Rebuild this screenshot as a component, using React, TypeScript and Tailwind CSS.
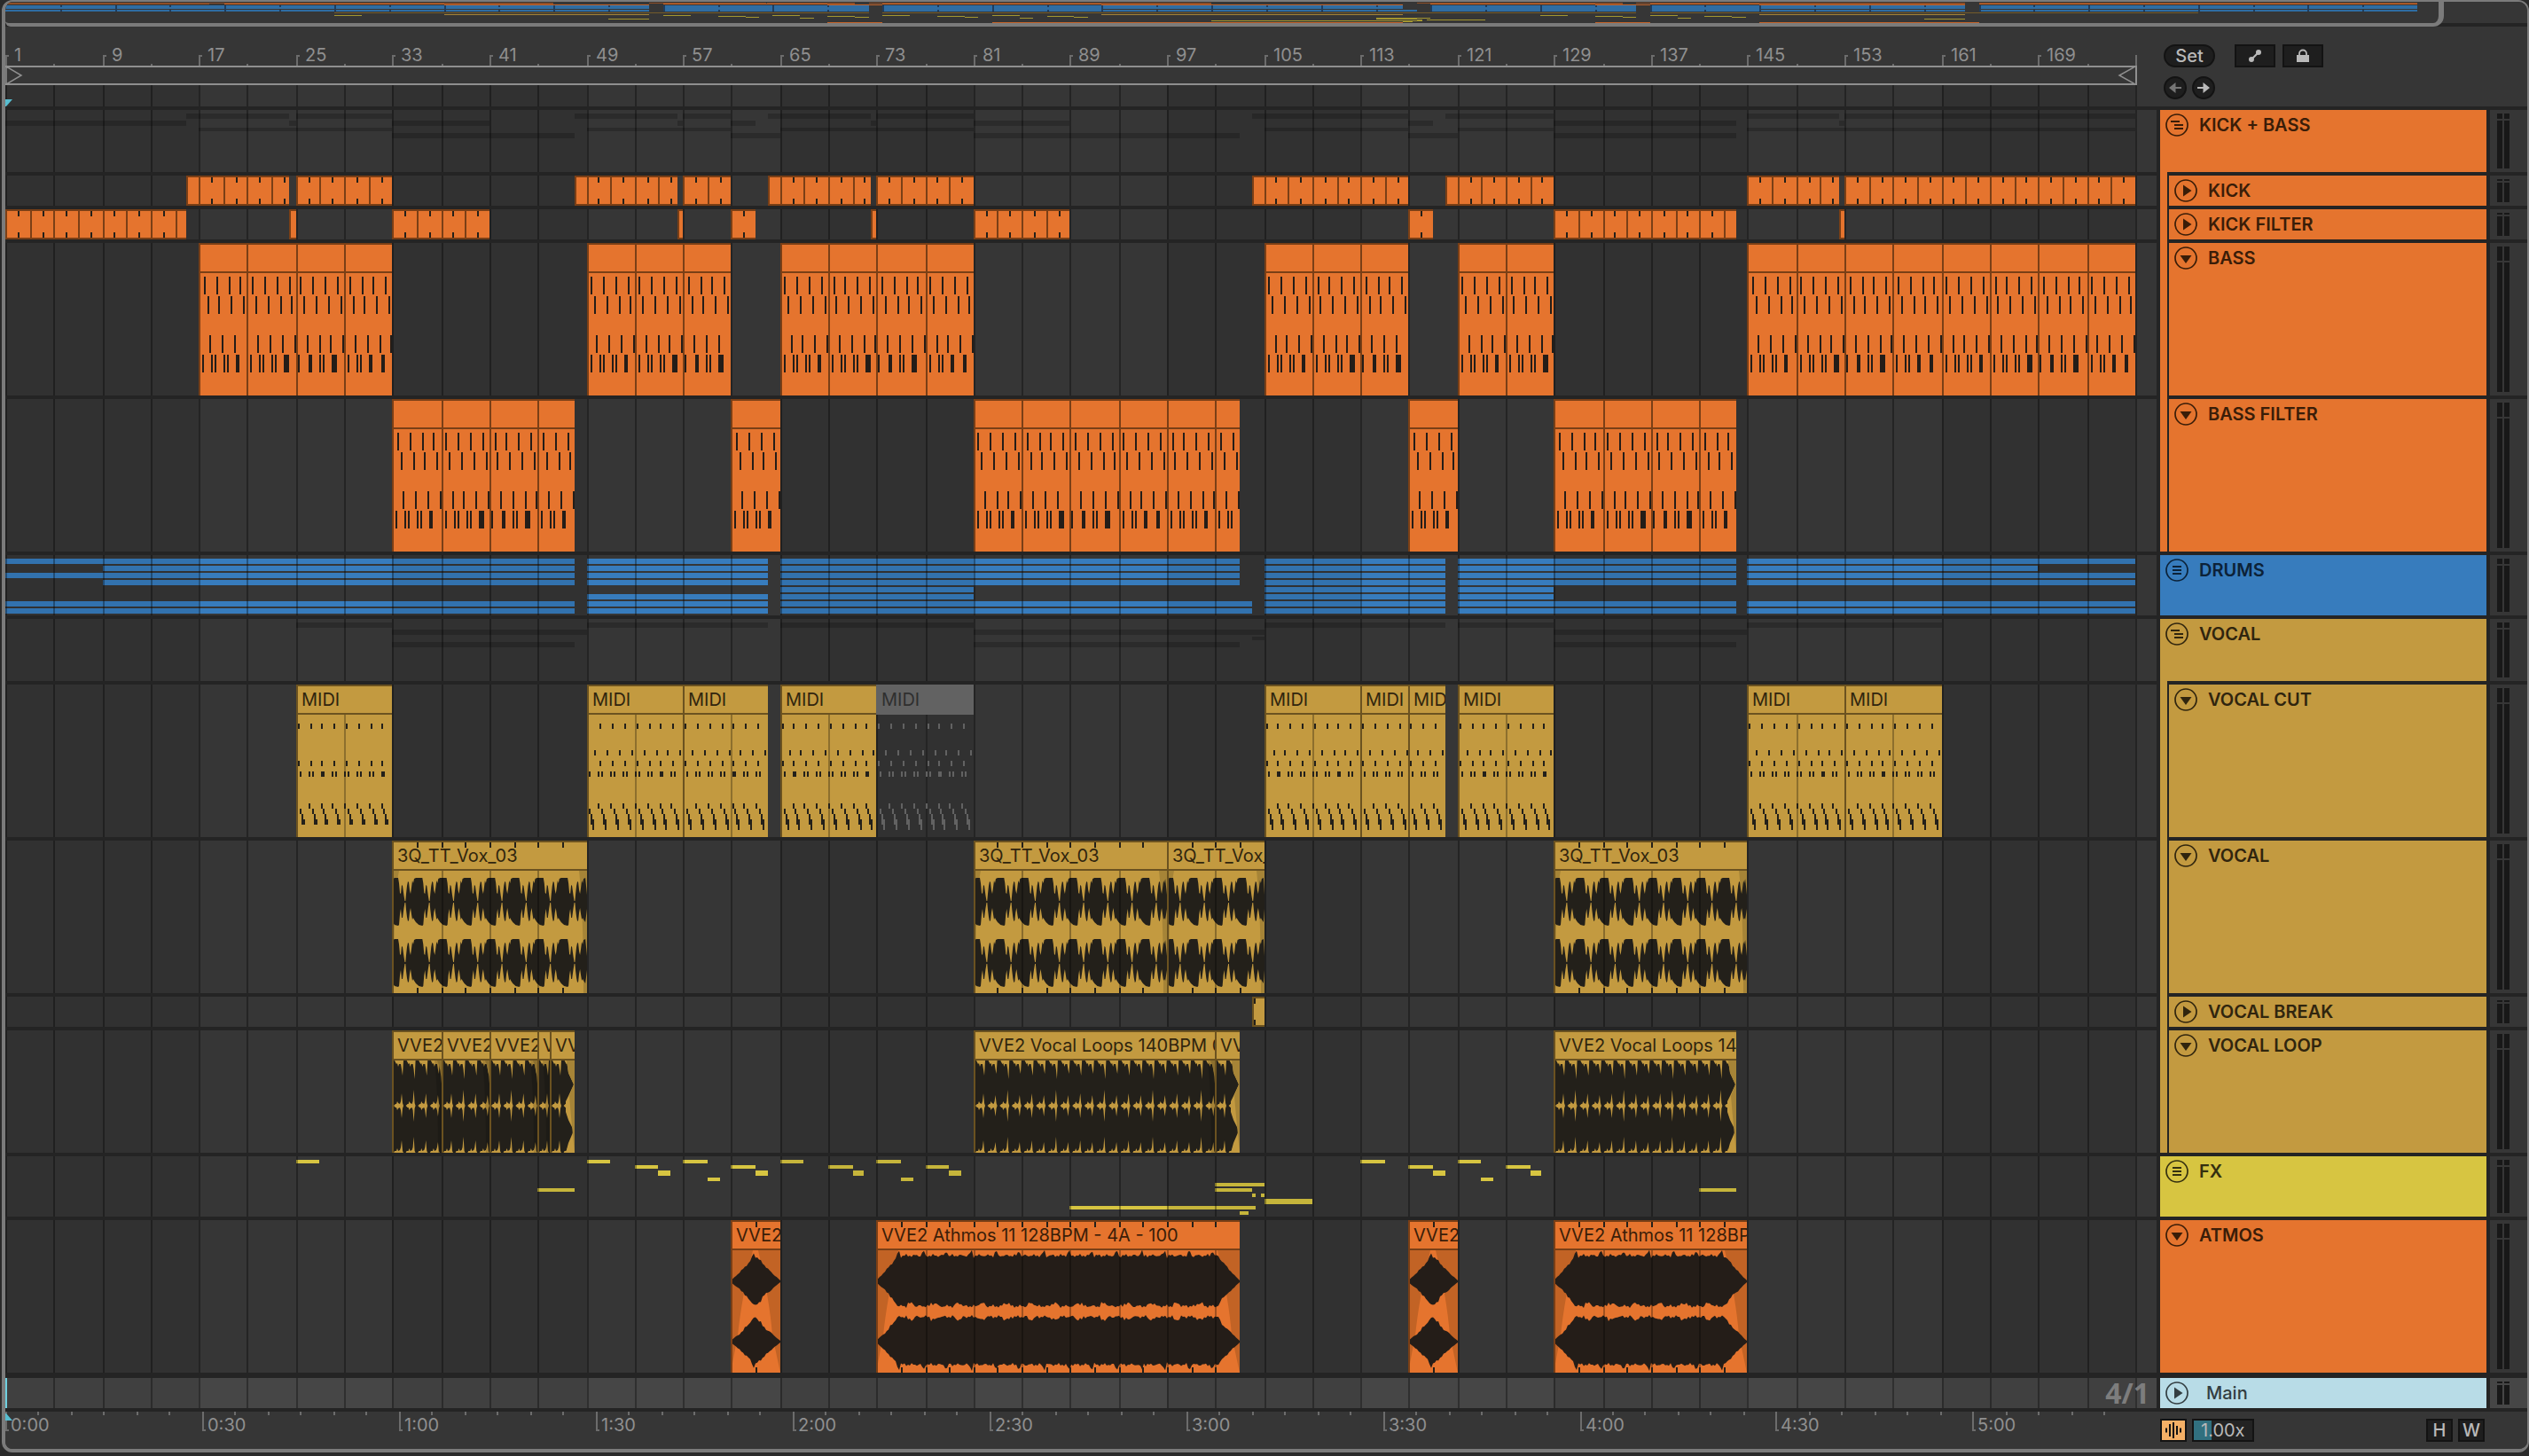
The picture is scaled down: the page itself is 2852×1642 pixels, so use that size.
import React from "react";

const LANE_W = 2426
const BAR = 13.645
const END = 177

interface IClip {
    from: number;
    to: number;
    name?: string;
    muted?: boolean;
}
interface ITheme {
    fill: string;
    edge: string;
    grid: string;
    ink: string;
    wave: string;
    shade: string;
}
interface ITrack {
    name: string;
    kind: "group" | "block" | "bass" | "cut" | "vox" | "loop" | "atmos" | "drums" | "fx";
    icon: "stack" | "lines" | "right" | "down";
    height: string;
    px: number;
    color: string;
    text: string;
    strip?: string;
    meter: string;
    theme?: ITheme;
    clips?: IClip[];
    rows?: number[][];
}

// x of a bar on the lane, kept on even pixels
const snap = (bar: number) => 2 * Math.round(((bar - 1) * BAR + 0.08) / 2)
const pct = (x: number) => `${(x / LANE_W) * 100}%`
const clip = (from: number, to: number, name?: string, muted?: boolean): IClip => ({ from, to, name, muted })

const ORANGE: ITheme = { fill: "#e5742e", edge: "#7a3f16", grid: "#7a3f16", ink: "#3a1d08", wave: "#241d18", shade: "#c26325" }
const GOLD: ITheme = { fill: "#c39a40", edge: "#6b5220", grid: "#8d6f2d", ink: "#30250e", wave: "#23201a", shade: "#a68437" }

const VVE = "VVE2 Vocal Loops 140BPM 01"
const ATM = "VVE2 Athmos 11 128BPM - 4A - 100"
const VOX = "3Q_TT_Vox_03"

const KICK = [clip(15.9, 24.4), clip(25, 33), clip(48, 56.5), clip(57, 61), clip(64, 72.5), clip(73, 81), clip(104, 117), clip(120, 129), clip(145, 152.6), clip(153, 177)]
const KICK_FILTER = [clip(1, 15.9), clip(24.4, 25), clip(33, 41), clip(56.6, 57), clip(61, 63), clip(72.5, 73), clip(81, 89), clip(117, 119), clip(129, 144), clip(152.6, 153)]
const BASS = [clip(17, 33), clip(49, 61), clip(65, 81), clip(105, 117), clip(121, 129), clip(145, 177)]
const BASS_FILTER = [clip(33, 48), clip(61, 65), clip(81, 103), clip(117, 121), clip(129, 144)]
const CUT = [
    clip(25, 33, "MIDI"), clip(49, 57, "MIDI"), clip(57, 64, "MIDI"), clip(65, 73, "MIDI"), clip(73, 81, "MIDI", true),
    clip(105, 113, "MIDI"), clip(113, 117, "MIDI"), clip(117, 120, "MIDI"), clip(121, 129, "MIDI"), clip(145, 153, "MIDI"), clip(153, 161, "MIDI"),
]
const VOCAL = [clip(33, 49, VOX), clip(81, 97, VOX), clip(97, 105, VOX), clip(129, 145, VOX)]
const BREAK = [clip(104, 105)]
const LOOP = [clip(33, 37, VVE), clip(37, 41, VVE), clip(41, 45, VVE), clip(45, 46, VVE), clip(46, 48, VVE), clip(81, 101, VVE), clip(101, 103, VVE), clip(129, 144, VVE)]
const ATMOS = [clip(61, 65, ATM), clip(73, 103, ATM), clip(117, 121, ATM), clip(129, 145, ATM)]

// summary rows are [from, to, y, height]
const ghost = (clips: IClip[], y: number, h: number) => clips.map(c => [c.from, c.to, y, h])
const KICK_ROWS = [...ghost(KICK, 4, 6), ...ghost(KICK_FILTER, 12, 6), ...ghost(BASS, 20, 4), ...ghost(BASS_FILTER, 26, 6)]
const VOCAL_ROWS = [...ghost(CUT, 4, 6), ...ghost(VOCAL, 12, 6), ...ghost(BREAK, 20, 4), ...ghost(LOOP, 26, 6)]

const DRUM_SEGMENTS = [
    [[1, 48], [49, 64], [65, 103], [105, 120], [121, 144], [145, 177]],
    [[9, 48], [49, 64], [65, 103], [105, 120], [121, 144], [145, 169]],
    [[1, 48], [49, 64], [65, 103], [105, 120], [121, 144], [145, 177]],
    [[9, 48], [49, 64], [65, 103], [105, 120], [121, 144], [145, 177]],
    [[65, 81], [105, 120], [121, 129]],
    [[49, 64], [65, 81], [105, 120], [121, 129]],
    [[1, 48], [49, 64], [65, 104], [105, 120], [121, 144], [145, 177]],
    [[1, 48], [49, 64], [65, 104], [105, 120], [121, 144], [145, 177]],
]
const DRUM_ROWS = DRUM_SEGMENTS.flatMap((segs, i) => segs.map(s => [s[0], s[1], 4 + i * 8, 6]))

const FX_ROWS = [
    [25, 27, 4, 4], [45, 48, 36, 4], [49, 51, 4, 4], [53, 55, 10, 4], [55, 56, 16, 6], [57, 59, 4, 4], [59, 60, 24, 4],
    [61, 63, 10, 4], [63, 64, 16, 6], [65, 67, 4, 4], [69, 71, 10, 4], [71, 72, 16, 6], [73, 75, 4, 4], [75, 76, 24, 4],
    [77, 79, 10, 4], [79, 80, 16, 6], [89, 104.4, 56, 4], [101, 105, 30, 4], [101, 104, 36, 4], [104, 104.4, 42, 4],
    [104.7, 105, 42, 4], [103, 103.7, 62, 4], [105, 109, 48, 6], [113, 115, 4, 4], [117, 119, 10, 4], [119, 120, 16, 6],
    [121, 123, 4, 4], [123, 124, 24, 4], [125, 127, 10, 4], [127, 128, 16, 6], [141, 144, 36, 4],
]

const O = { color: "bg-[#e5742e]", text: "text-[#3a1d08]", theme: ORANGE }
const G = { color: "bg-[#c39a40]", text: "text-[#30250e]", theme: GOLD }

const TRACKS: ITrack[] = [
    { ...O, name: "KICK + BASS", kind: "group", icon: "stack", height: "h-[70px]", px: 70, meter: "h-1.5", rows: KICK_ROWS },
    { ...O, name: "KICK", kind: "block", icon: "right", height: "h-[34px]", px: 34, strip: "bg-[#e5742e]", meter: "h-0.5", clips: KICK },
    { ...O, name: "KICK FILTER", kind: "block", icon: "right", height: "h-[34px]", px: 34, strip: "bg-[#e5742e]", meter: "h-0.5", clips: KICK_FILTER },
    { ...O, name: "BASS", kind: "bass", icon: "down", height: "h-[172px]", px: 172, strip: "bg-[#e5742e]", meter: "h-4", clips: BASS },
    { ...O, name: "BASS FILTER", kind: "bass", icon: "down", height: "h-[172px]", px: 172, strip: "bg-[#e5742e]", meter: "h-4", clips: BASS_FILTER },
    { name: "DRUMS", kind: "drums", icon: "lines", height: "h-[68px]", px: 68, color: "bg-[#377cbd]", text: "text-[#0c2238]", meter: "h-1.5", rows: DRUM_ROWS },
    { ...G, name: "VOCAL", kind: "group", icon: "stack", height: "h-[70px]", px: 70, meter: "h-1.5", rows: VOCAL_ROWS },
    { ...G, name: "VOCAL CUT", kind: "cut", icon: "down", height: "h-[172px]", px: 172, strip: "bg-[#c39a40]", meter: "h-4", clips: CUT },
    { ...G, name: "VOCAL", kind: "vox", icon: "down", height: "h-[172px]", px: 172, strip: "bg-[#c39a40]", meter: "h-4", clips: VOCAL },
    { ...G, name: "VOCAL BREAK", kind: "block", icon: "right", height: "h-[34px]", px: 34, strip: "bg-[#c39a40]", meter: "h-0.5", clips: BREAK },
    { ...G, name: "VOCAL LOOP", kind: "loop", icon: "down", height: "h-[138px]", px: 138, strip: "bg-[#c39a40]", meter: "h-4", clips: LOOP },
    { name: "FX", kind: "fx", icon: "lines", height: "h-[68px]", px: 68, color: "bg-[#d7c541]", text: "text-[#343010]", meter: "h-1.5", rows: FX_ROWS },
    { ...O, name: "ATMOS", kind: "atmos", icon: "down", height: "h-[172px]", px: 172, meter: "h-4", clips: ATMOS },
]

const range = (from: number, to: number, step: number) => {
    const out: number[] = []
    for (let n = from; n < to; n += step) out.push(n)
    return out
}

const Grid = () => (
    <svg className="absolute inset-0 h-full w-full" viewBox={`0 0 ${LANE_W} 10`} preserveAspectRatio="none" shapeRendering="crispEdges" aria-hidden="true">
        {range(1, END, 32).map(n => <rect key={n} x={snap(n)} y={0} width={snap(n + 16) - snap(n)} height={10} fill="#000" opacity={0.08} />)}
        {range(1, END + 1, 4).map(n => <rect key={n} x={snap(n)} y={0} width={2} height={10} fill="#000" opacity={0.33} />)}
    </svg>
)

const BASS_STEPS = [
    [[4, 2], [14, 2], [18, 2], [28, 2], [32, 2], [42, 4]],
    [[4, 2], [14, 2], [18, 2], [28, 2], [32, 2], [42, 6]],
    [[2, 2], [14, 4], [26, 2], [30, 2], [40, 6]],
    [[4, 2], [14, 2], [18, 2], [28, 4], [42, 4]],
]

const BassNotes = ({ c, w }: { c: IClip; w: number }) => {
    const x0 = snap(c.from)
    const even = (v: number) => 2 * Math.round(v / 2)
    return (
        <g fill="#241d18">
            {range(c.from, c.to, 1).map(n => {
                const x = (n - 1) * BAR - x0
                return (
                    <g key={n}>
                        <rect x={even(x + 5.4)} y={38} width={2} height={20} />
                        <rect x={even(x + 9)} y={60} width={2} height={20} />
                        <rect x={even(x + 12)} y={104} width={2} height={20} />
                    </g>
                )
            })}
            {range(c.from, c.to, 4).map((n, i) => BASS_STEPS[i % 4].map(([dx, sw]) => {
                const x = snap(n) - x0 + dx
                return x < w ? <rect key={`${n}-${dx}`} x={x} y={126} width={sw} height={20} /> : null
            }))}
            {range(c.from + 4, c.to, 4).map(n => <rect key={n} x={snap(n) - x0} y={0} width={2} height={172} fill="#7a3f16" />)}
        </g>
    )
}

const CutNotes = ({ c, color, full }: { c: IClip; color: string; full: boolean }) => {
    const x0 = snap(c.from)
    return (
        <g fill={color}>
            {range(c.from, c.to, 1).map(n => {
                const x = 2 * Math.round(((n - 1) * BAR - x0) / 2)
                return (
                    <g key={n}>
                        <rect x={x + 2} y={44} width={2} height={6} />
                        {full && <rect x={x + 10} y={74} width={2} height={6} />}
                        <rect x={x + 2} y={86} width={2} height={6} />
                        <rect x={x + 4} y={98} width={2} height={6} />
                        <rect x={x + 14} y={98} width={2} height={6} />
                        <rect x={x + 14} y={134} width={2} height={6} />
                        <rect x={x + 4} y={140} width={2} height={6} />
                        <rect x={x + 6} y={146} width={2} height={6} />
                        <rect x={x + 6} y={152} width={4} height={6} />
                        {full && <rect x={x + 8} y={158} width={2} height={6} />}
                    </g>
                )
            })}
        </g>
    )
}

// one two-bar phrase of the vocal: [offset, upper, lower]
const VOX_SHAPE = [
    [0, 27, 26], [4, 27, 27], [5, 21, 26], [6, 10, 14], [7, 9, 8], [8, 19, 18], [9, 18, 18], [10.5, 7, 7], [11.5, 1, 1], [12.3, 1, 1],
    [13, 9, 9], [14, 18, 17], [15, 23, 22], [16, 22, 21], [17, 13, 12], [18, 9, 7], [19, 16, 14], [20, 24, 20], [21, 21, 18], [22, 26, 20], [24, 27, 23],
]

const voxPath = (w: number, cy: number) => {
    const top: string[] = []
    const bottom: string[] = []
    for (let k = -1; k * 27.3 < w; k++) {
        VOX_SHAPE.forEach(([dx, up, down]) => {
            const x = k * 27.3 + 3 + dx
            if (x < 0 || x > w) return
            top.push(`${x.toFixed(1)} ${cy - up}`)
            bottom.unshift(`${x.toFixed(1)} ${cy + down}`)
        })
    }
    return `M0 ${cy - 25}L${top.join("L")}L${w} ${cy - 8}L${w} ${cy + 8}L${bottom.join("L")}L0 ${cy + 22}Z`
}

const VoxWave = ({ w }: { w: number }) => (
    <g fill={GOLD.wave}>
        <path fill={GOLD.shade} d={`M0 34H8Q2 60 2 172H0ZM${w} 34H${w - 9}Q${w - 4} 80 ${w - 4} 172H${w}Z`} />
        <path d={voxPath(w, 69)} />
        <path d={voxPath(w, 138)} />
    </g>
)

// gaps the loop leaves once a bar: centre, top edge, bottom edge
const GAP_MID = [[2, 0], [4, 2], [5, 2], [6, 5], [7, 3], [9, 2], [10, 5], [11, 14], [12, 3], [13, 0]]
const GAP_TOP = [[3, 0], [5, 4], [6, 3], [7, 7], [8, 4], [10, 4], [11, 10], [12, 17], [13, 0]]
const GAP_LOW = [[2, 0], [3, 2], [5, 2], [6, 5], [7, 2], [9, 3], [10, 6], [11, 14], [12, 2], [13, 0]]

const loopGap = (x: number, deep: number) => {
    const line = (pts: number[][], y: number, dir: number) => pts.map(([dx, dy]) => `${(x + dx).toFixed(1)} ${y + dir * (dy > 12 ? dy + deep : dy)}`)
    const up = line(GAP_MID, 85, -1)
    const down = line(GAP_MID, 85, 1).reverse()
    return `M${up.join("L")}L${down.join("L")}ZM${line(GAP_TOP, 34, 1).join("L")}ZM${line(GAP_LOW, 138, -1).join("L")}Z`
}

const LoopWave = ({ w, last, seed }: { w: number; last: boolean; seed: number }) => {
    const gaps = range(0, w - 4, BAR).map((x, i) => loopGap(x, (i + seed) % 4 === 2 ? 4 : -(i % 2) * 2)).join("")
    return (
        <g>
            <rect x={0} y={34} width={w} height={104} fill={GOLD.wave} />
            <path fill={GOLD.fill} d={gaps} />
            {!last && w > 20 && <path fill={GOLD.shade} d={`M${w} 34h-5q4 8 5 26z`} />}
            {!last && <path fill="#000" opacity={0.15} d={`M${w} 34H${w - 8}Q${w - 4} 70 ${w - 4} 138H${w}Z`} />}
            {last && (
                <g>
                    <path fill={GOLD.fill} d={`M${w - 9} 34L${w - 8} 41L${w - 7} 48L${w - 1} 61L${w - 7} 74L${w - 10} 80V92L${w - 7} 101L${w - 1} 113L${w - 7} 127L${w - 10} 138H${w}V34Z`} />
                    <path fill={GOLD.shade} d={`M${w - 10} 34h1L${w - 7} 48L${w - 1} 61L${w - 6} 74Q${w - 3} 110 ${w} 138V34Z`} />
                </g>
            )}
        </g>
    )
}

const atmosPath = (w: number, cy: number, flip: number) => {
    const up: string[] = []
    const low: string[] = []
    const ramp = w < 80 ? w / 2 : 25
    for (let x = 0; x <= w; x += 2) {
        const edge = Math.min(1, Math.min(x, w - x) / ramp)
        const gain = edge < 1 ? Math.pow(edge, 1.1) : 1
        const phase = (x - 25 + 273) % 27.3
        const peak = phase < 2 ? 5 : phase < 4 ? -1 : phase > 25.3 ? 3 : 0
        const noise = Math.sin(x * 1.7) + Math.sin(x * 0.61 + cy)
        const dip = phase > 9 && phase < 17 ? -3 : 0
        const a = 28 + peak + noise
        const b = 27 + dip + noise
        up.push(`${x} ${(cy - 1 - gain * (flip ? b : a)).toFixed(1)}`)
        low.unshift(`${x} ${(cy + 1 + gain * (flip ? a - 3 : b)).toFixed(1)}`)
    }
    return `M${up.join("L")}L${w} ${cy}L${low.join("L")}Z`
}

const AtmosWave = ({ w }: { w: number }) => (
    <g fill={ORANGE.wave}>
        <path fill={ORANGE.shade} d={`M0 34H25Q12 90 8 130L0 172ZM${w} 34H${w - 25}Q${w - 12} 90 ${w - 9} 130L${w} 172Z`} />
        <path d={atmosPath(w, 69, 0)} />
        <path d={atmosPath(w, 137, 1)} />
    </g>
)

const Clip = ({ c, track }: { c: IClip; track: ITrack }) => {
    const theme = track.theme as ITheme
    const x0 = snap(c.from)
    const w = snap(c.to) - x0
    const h = track.px
    const kind = track.kind
    const short = kind === "block"
    const first = c.from % 2 === 1 ? c.from + 1 : Math.ceil(c.from / 2) * 2
    const audio = kind === "vox" || kind === "atmos"
    return (
        <div className="absolute inset-y-0 overflow-hidden" style={{ left: pct(x0), width: pct(w) }}>
            <svg className="absolute inset-0 h-full w-full" viewBox={`0 0 ${w} ${h}`} preserveAspectRatio="none" aria-hidden="true">
                {!c.muted && <rect width={w} height={h} fill={theme.fill} />}
                {c.muted && <rect width={w} height={34} fill="#626262" />}
                {kind === "vox" && <VoxWave w={w} />}
                {kind === "loop" && <LoopWave w={w} seed={c.from === 81 ? 0 : 1} last={c.to === 48 || c.to === 103 || c.to === 144} />}
                {kind === "atmos" && <AtmosWave w={w} />}
                <g shapeRendering="crispEdges">
                    {kind === "bass" && <BassNotes c={c} w={w} />}
                    {kind === "cut" && range(c.from + 4, c.to, 4).map(n => <rect key={n} x={snap(n) - x0} y={34} width={2} height={h} fill={c.muted ? "#242424" : theme.grid} />)}
                    {kind === "cut" && <CutNotes c={c} full={c.from > 25} color={c.muted ? "#626262" : "#23201a"} />}
                    {audio && range(c.from + 4, c.to, 4).map(n => <rect key={n} x={snap(n) - x0} y={34} width={2} height={h} fill="#000" opacity={0.3} />)}
                    {audio && range(c.from + 2, c.to, 2).map(n => (
                        <g key={n} fill="#23201a">
                            <rect x={snap(n) - x0} y={2} width={2} height={6} />
                            <rect x={snap(n) - x0} y={h - 6} width={2} height={6} />
                        </g>
                    ))}
                    {short && range(Math.ceil((c.from + 0.3) / 2) * 2 + 1 - (c.from % 2 === 1 ? 0 : 2), c.to, 2).map(n => (
                        n > c.from ? <rect key={n} x={snap(n) - x0} y={0} width={2} height={h} fill={theme.edge} /> : null
                    ))}
                    {short && range(first, c.to, 2).map(n => {
                        if (n === 16) return null
                        const x = theme === GOLD ? 2 : snap(n) - x0
                        return (
                            <g key={n} fill="#23201a">
                                <rect x={x} y={2} width={2} height={6} />
                                <rect x={x} y={26} width={2} height={6} />
                            </g>
                        )
                    })}
                    {!c.muted && <rect width={w} height={2} fill={theme.edge} />}
                    {!c.muted && <rect width={2} height={h} fill={theme.edge} />}
                    {!c.muted && <rect y={32} width={w} height={2} fill={theme.edge} />}
                </g>
            </svg>
            {c.name && (
                <span className="relative block h-[34px] w-full overflow-hidden pl-1.5 text-[20px] leading-[34px] whitespace-nowrap" style={{ color: c.muted ? "#2f2f2f" : theme.ink }}>
                    {c.name}
                </span>
            )}
        </div>
    )
}

const ROW_FILL: Record<string, string> = { group: "#2b2b2b", drums: "#377cbd", fx: "#d7c541" }

const Lane = ({ track }: { track: ITrack }) => {
    const { rows, clips } = track
    return (
        <div className={`relative min-w-0 flex-1 overflow-hidden bg-[#363636] ${track.height}`}>
            {rows && (
                <svg className="absolute inset-0 h-full w-full" viewBox={`0 0 ${LANE_W} ${track.px}`} preserveAspectRatio="none" shapeRendering="crispEdges" aria-hidden="true">
                    {rows.map((r, i) => <rect key={i} x={snap(r[0])} y={r[2]} width={snap(r[1]) - snap(r[0])} height={r[3]} fill={ROW_FILL[track.kind]} />)}
                </svg>
            )}
            <Grid />
            {clips && clips.map(c => <Clip key={c.from} c={c} track={track} />)}
        </div>
    )
}

const TrackIcon = ({ icon }: { icon: ITrack["icon"] }) => (
    <svg className="h-[26px] w-[26px]" viewBox="0 0 26 26" fill="none" stroke="currentColor" strokeWidth="2" aria-hidden="true">
        <circle cx="13" cy="13" r="12" strokeWidth="1.7" />
        {icon === "stack" && <path d="M6 9h10M10 13h10M10 17h10" />}
        {icon === "lines" && <path d="M8 9h10M8 13h10M8 17h10" />}
        {icon === "right" && <path d="M10 6.500v13l9.500-6.500z" fill="currentColor" stroke="none" />}
        {icon === "down" && <path d="M6.500 10h13l-6.500 9z" fill="currentColor" stroke="none" />}
    </svg>
)

const Meter = ({ top, bg }: { top: string; bg: string }) => (
    <div className={`flex w-[42px] gap-0.5 py-1 pl-2 ${bg}`}>
        {[0, 1].map(i => (
            <div key={i} className="flex w-1.5 flex-col gap-0.5">
                <div className={`bg-[#181818] ${top}`}></div>
                <div className="flex-1 bg-[#181818]"></div>
            </div>
        ))}
    </div>
)

const TrackRow = ({ track }: { track: ITrack }) => (
    <div className="flex gap-1">
        <Lane track={track} />
        <div className="flex w-[368px]">
            {track.strip && <div className={`-mt-1 mr-0.5 w-2 ${track.strip}`}></div>}
            <div className={`flex flex-1 items-start gap-3 pt-1 pl-1.5 ${track.color} ${track.text}`}>
                <button aria-label={`Unfold ${track.name}`}><TrackIcon icon={track.icon} /></button>
                <span className="text-[20px] leading-[26px] font-semibold">{track.name}</span>
            </div>
        </div>
        <Meter top={track.meter} bg="bg-[#363636]" />
    </div>
)

const MINI = 15.455
const MINI_W = 2844
const mini = (clips: IClip[], y: number, h: number, fill: string) => clips.map(c => ({ from: c.from, to: c.to, y, h, fill }))
const MINI_ROWS = [
    ...mini(KICK, 3, 1, "#8f4e26"),
    ...mini(KICK_FILTER, 3, 2, "#8f4e26"),
    ...mini(BASS, 4, 1, "#c5642a"),
    ...mini(BASS_FILTER, 5, 1, "#c5642a"),
    ...DRUM_SEGMENTS[0].map(s => ({ from: s[0], to: s[1], y: 6, h: 4, fill: "#2f6da3" })),
    ...DRUM_SEGMENTS[5].map(s => ({ from: s[0], to: s[1], y: 10, h: 1, fill: "#2f6da3" })),
    ...DRUM_SEGMENTS[6].map(s => ({ from: s[0], to: s[1], y: 11, h: 2, fill: "#2f6da3" })),
    ...mini(CUT, 14, 1, "#745c2b"),
    ...mini(VOCAL, 14, 1, "#745c2b"),
    ...mini(LOOP, 16, 1, "#a68437"),
    ...FX_ROWS.map(r => ({ from: r[0], to: r[1], y: 17 + Math.round(r[2] / 9), h: 1, fill: "#a3962f" })),
    ...mini(ATMOS, 25, 1, "#c5642a"),
]

const Overview = () => (
    <div className="relative h-7 border-b-4 border-[#242424] bg-[#363636]">
        <svg className="absolute inset-x-0 -top-0.5 h-[26px] w-full" viewBox={`0 0 ${MINI_W} 26`} preserveAspectRatio="none" shapeRendering="crispEdges" aria-hidden="true">
            {MINI_ROWS.map((r, i) => <rect key={i} x={(r.from - 1) * MINI} y={r.y} width={(r.to - r.from) * MINI} height={r.h} fill={r.fill} />)}
            {range(5, END, 4).map(n => <rect key={n} x={(n - 1) * MINI} y={6} width={2} height={n % 8 === 1 ? 7 : 2} fill="#1f3d5e" />)}
            {range(5, END, 4).map(n => <rect key={n} x={(n - 1) * MINI} y={11} width={2} height={2} fill="#1f3d5e" />)}
        </svg>
        <div className="absolute top-0 left-0 h-7 w-[96.7%] rounded-br-xl rounded-bl-md border-r-[6px] border-b-4 border-[#7b7b7b]"></div>
    </div>
)

const Ruler = () => (
    <div className="relative h-[90px] min-w-0 flex-1">
        <div className="relative h-11 overflow-hidden">
            {range(1, END, 8).map(n => (
                <div key={n} className="absolute bottom-0 h-3 border-l-2 border-[#6c6c6c]" style={{ left: pct(snap(n)) }}>
                    <span className="absolute top-0 left-0 h-0.5 w-0.5 bg-[#6c6c6c]"></span>
                    <span className="absolute bottom-0 left-2 text-[20px] leading-6 text-[#8f8f8f]">{n}</span>
                </div>
            ))}
            {range(5, END, 8).map(n => <div key={n} className="absolute bottom-0 h-0.5 w-0.5 bg-[#6c6c6c]" style={{ left: pct(snap(n)) }}></div>)}
            <div className="absolute bottom-0 h-3 w-0.5 bg-[#6c6c6c]" style={{ left: pct(snap(END)) }}></div>
        </div>
        <div className="relative h-[46px]">
            <Grid />
            <div className="relative flex h-[22px] justify-between border-y-2 border-r-2 border-[#8f8f8f] bg-[#363636]" style={{ width: pct(snap(END) + 2) }}>
                <svg className="h-[18px] w-5" viewBox="0 0 20 18" fill="none" stroke="#8f8f8f" strokeWidth="1.500" aria-hidden="true"><path d="M1 -1V19L18 9L1 -1" /></svg>
                <svg className="h-[18px] w-5" viewBox="0 0 20 18" fill="none" stroke="#8f8f8f" strokeWidth="1.500" aria-hidden="true"><path d="M20 -1L2 9L20 19" /></svg>
            </div>
            <svg className="absolute bottom-0 left-0 h-2 w-2" viewBox="0 0 8 8" aria-hidden="true"><path d="M0 0h8L1 8H0z" fill="#57bdd0" /></svg>
        </div>
    </div>
)

const Toolbar = () => (
    <div className="w-[414px] pt-5 pl-1 text-[#b9b9b9]">
        <div className="flex items-center">
            <button className="h-[26px] w-[58px] rounded-full border-2 border-[#131313] bg-[#1e1e1e] text-[20px] leading-[22px] font-medium">Set</button>
            <button aria-label="Automation mode" className="ml-[22px] flex h-[26px] w-[46px] items-center justify-center border-2 border-[#131313] bg-[#1e1e1e]">
                <svg className="h-4 w-4" viewBox="0 0 16 16" fill="currentColor" aria-hidden="true">
                    <circle cx="4" cy="12" r="3" /><circle cx="12" cy="4" r="3" /><path d="M4 12L12 4" stroke="currentColor" strokeWidth="2" />
                </svg>
            </button>
            <button aria-label="Lock envelopes" className="ml-2 flex h-[26px] w-[46px] items-center justify-center border-2 border-[#131313] bg-[#1e1e1e]">
                <svg className="h-4 w-4" viewBox="0 0 16 16" aria-hidden="true">
                    <rect x="1" y="7" width="14" height="8" fill="currentColor" /><path d="M4 8V5.500a4 4 0 0 1 8 0V8" fill="none" stroke="currentColor" strokeWidth="1.800" />
                </svg>
            </button>
        </div>
        <div className="mt-2.5 flex gap-1.5">
            <button aria-label="Previous locator" className="flex h-[26px] w-[26px] items-center justify-center rounded-full border-2 border-[#131313] bg-[#1e1e1e] text-[#757575]">
                <svg className="h-[14px] w-[14px]" viewBox="0 0 14 14" fill="currentColor" aria-hidden="true"><path d="M0 7L7.500 1V6H14V8H7.500V13Z" /></svg>
            </button>
            <button aria-label="Next locator" className="flex h-[26px] w-[26px] items-center justify-center rounded-full border-2 border-[#131313] bg-[#1e1e1e]">
                <svg className="h-[14px] w-[14px]" viewBox="0 0 14 14" fill="currentColor" aria-hidden="true"><path d="M14 7L6.500 1V6H0V8H6.500V13Z" /></svg>
            </button>
        </div>
    </div>
)

const MainRow = () => (
    <div className="mt-0.5 flex gap-1">
        <div className="relative flex h-[34px] min-w-0 flex-1 items-center justify-end overflow-hidden bg-[#464646] pr-2">
            <Grid />
            <div className="absolute inset-y-0 left-0 w-0.5 bg-[#6fd0e0]"></div>
            <span className="relative font-['Open_Sans',sans-serif] text-[32px] leading-8 font-bold text-[#7d7d7d]">4/1</span>
        </div>
        <div className="flex w-[368px] items-start gap-5 bg-[#b8dce7] pt-1 pl-1.5 text-[#333e42]">
            <button aria-label="Unfold Main"><TrackIcon icon="right" /></button>
            <span className="text-[20px] leading-[26px] font-medium">Main</span>
        </div>
        <Meter top="h-0.5" bg="bg-[#464646]" />
    </div>
)

const Footer = () => (
    <div className="flex h-[42px] gap-1 bg-[#363636]">
        <div className="relative min-w-0 flex-1 overflow-hidden">
            {range(0, 65, 1).map(i => {
                const secs = i * 5
                const major = secs % 30 === 0
                return (
                    <div key={i} className={`absolute top-0 border-l-2 border-[#6c6c6c] ${major ? "h-[22px]" : "h-1"}`} style={{ left: pct(2 * Math.round(i * 18.49)) }}>
                        {major && <span className="absolute bottom-0 left-0 h-0.5 w-0.5 bg-[#6c6c6c]"></span>}
                        {major && <span className="absolute top-[3px] left-1 text-[20px] leading-6 text-[#8f8f8f]">{`${Math.floor(secs / 60)}:${secs % 60 === 0 ? "00" : "30"}`}</span>}
                    </div>
                )
            })}
            <svg className="absolute top-0.5 left-0 h-2 w-2" viewBox="0 0 8 8" aria-hidden="true"><path d="M0 0h1L8 8H0z" fill="#57bdd0" /></svg>
        </div>
        <div className="flex w-[368px] items-start pt-2 text-[#b9b9b9]">
            <button aria-label="Follow waveform" className="flex h-[26px] w-[30px] items-center justify-center border-2 border-[#131313] bg-[#f5b066]">
                <svg className="h-5 w-5" viewBox="0 0 20 20" stroke="#131313" strokeWidth="2" aria-hidden="true"><path d="M2 7.500v5M6 3v14M10 1v18M14 5v10M18 7.500v5" /></svg>
            </button>
            <input aria-label="Waveform zoom" defaultValue="1.00x" className="ml-1.5 h-[26px] w-[70px] border-2 border-[#131313] bg-[linear-gradient(to_right,#31707f_20px,#232323_20px)] pl-2 text-[20px] leading-[22px]" />
            <button className="ml-auto h-[26px] w-[30px] border-2 border-[#131313] bg-[#1e1e1e] text-[20px] leading-[22px] font-medium">H</button>
            <button className="mr-0.5 ml-1.5 h-[26px] w-[30px] border-2 border-[#131313] bg-[#1e1e1e] text-[20px] leading-[22px] font-medium">W</button>
        </div>
        <div className="w-[42px]"></div>
    </div>
)

const App = () => {
    return (
        <div className="min-h-screen bg-[#2a2a2a] pb-1 pl-0.5 font-['Inter',sans-serif]">
            <div className="overflow-hidden rounded-xl border-4 border-t-2 border-r-2 border-[#7b7b7b] bg-[#363636]">
                <Overview />
                <div className="flex gap-1">
                    <Ruler />
                    <Toolbar />
                </div>
                <div className="flex flex-col gap-1 bg-[#242424] py-1">
                    {TRACKS.map((t, i) => <TrackRow key={i} track={t} />)}
                    <MainRow />
                </div>
                <Footer />
            </div>
        </div>
    )
}
export default App
